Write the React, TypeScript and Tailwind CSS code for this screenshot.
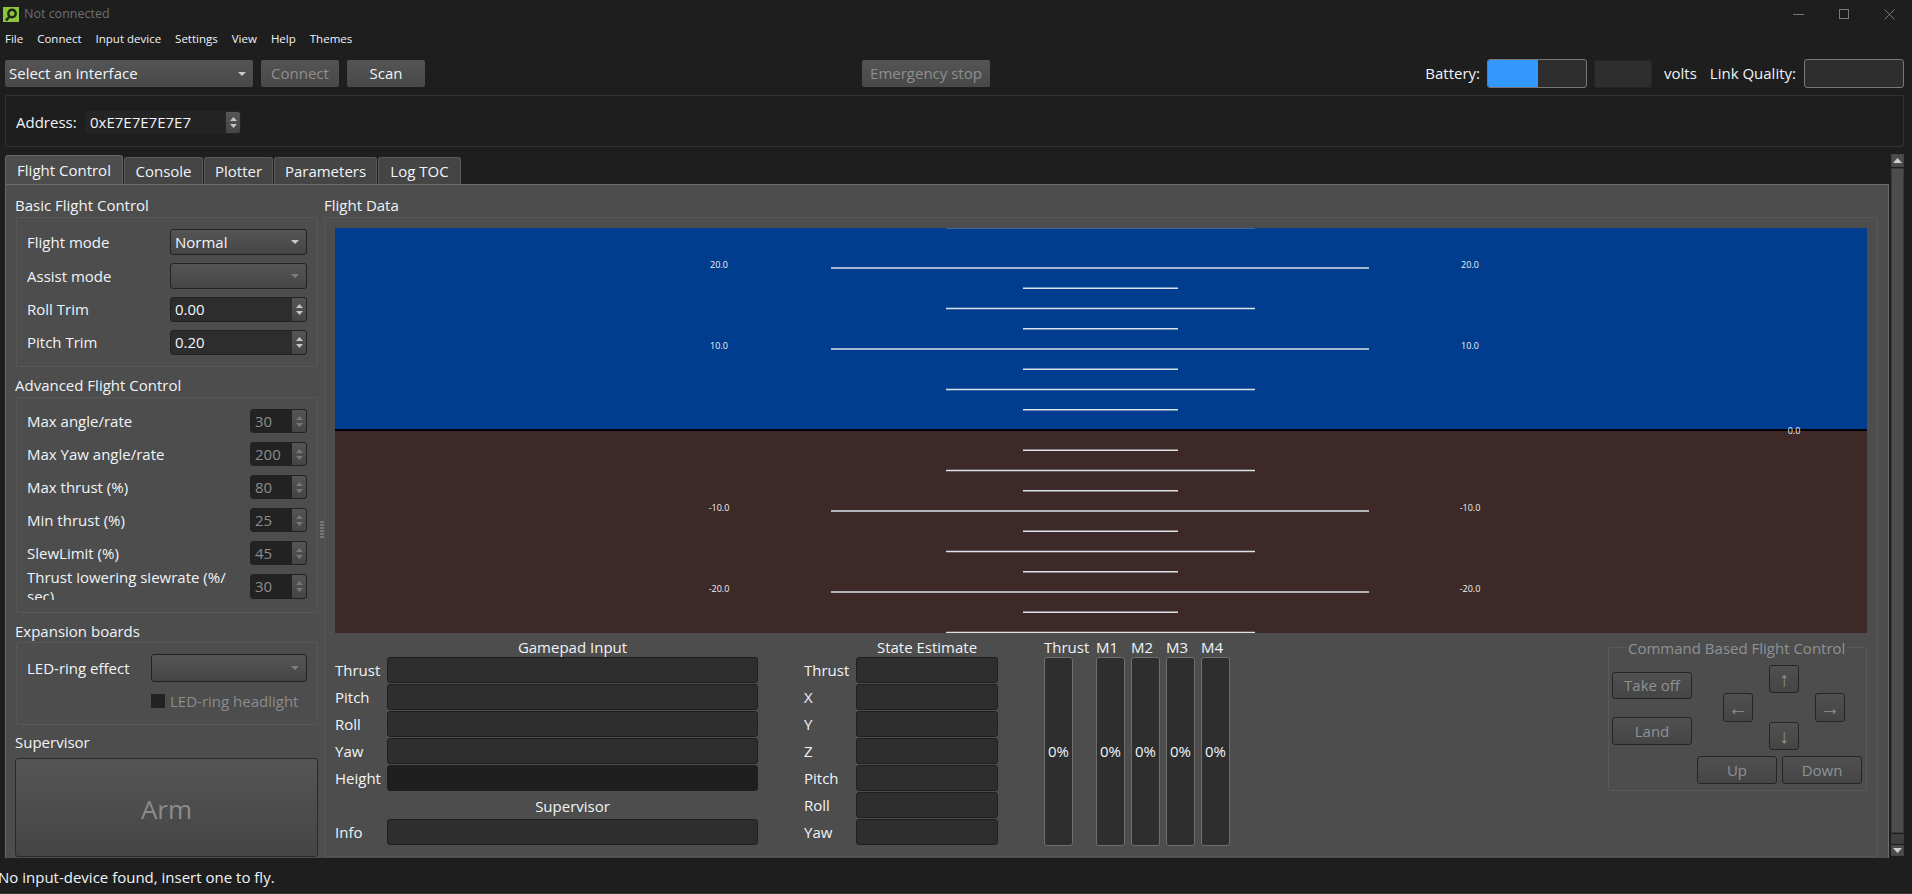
const LONG = [20, 10, -10, -20];
const MID = [25, 15, 5, -5, -15, -25];
const SHORT = [17.5, 12.5, 7.5, 2.5, -2.5, -7.5, -12.5, -17.5, -22.5];
const pitchY = (deg: number) => 202 - deg * 8.1;

function Logo() {
  return (
    <svg width="16" height="15" viewBox="0 0 16 15" className="ml-[3px] mr-[5px]">
      <rect width="16" height="15" fill="#8cc63f" />
      <circle cx="9" cy="6.5" r="3.7" fill="none" stroke="#1c2a14" strokeWidth="2.4" />
      <path d="M6.5 9.5 L3 13.5" stroke="#1c2a14" strokeWidth="2.6" />
    </svg>
  );
}

function Caret({ disabled }: { disabled?: boolean }) {
  return (
    <svg width="8" height="4" viewBox="0 0 8 4" className="shrink-0">
      <path d="M0 0 H8 L4 4 Z" fill={disabled ? "#7d7d7d" : "#c9c9c9"} />
    </svg>
  );
}

function Combo({ value, disabled }: { value?: string; disabled?: boolean }) {
  return (
    <div className="flex h-full flex-1 items-center justify-between rounded-[3px] border border-[#222] bg-gradient-to-b from-[#555] to-[#454545] pl-[4px] pr-[7px] text-[#f0f4f8]">
      <span>{value}</span>
      <Caret disabled={disabled} />
    </div>
  );
}

function Spin({ value, disabled, width }: { value: string; disabled?: boolean; width: string }) {
  const arrow = disabled ? "#777" : "#c4c4c4";
  return (
    <div className={`flex h-full items-stretch overflow-hidden rounded-[3px] ${width} ${disabled ? "bg-[#222] text-[#8c8c8c]" : "bg-[#2d2d2d] text-[#f0f4f8]"} border border-[#222]`}>
      <span className="flex flex-1 items-center pl-[4px]">{value}</span>
      <span className="flex w-[14px] flex-col items-center justify-center gap-[3px] bg-gradient-to-b from-[#555] to-[#454545]">
        <svg width="7" height="4" viewBox="0 0 7 4">
          <path d="M0 4 L3.5 0 L7 4 Z" fill={arrow} />
        </svg>
        <svg width="7" height="4" viewBox="0 0 7 4">
          <path d="M0 0 H7 L3.5 4 Z" fill={arrow} />
        </svg>
      </span>
    </div>
  );
}

function Row({ label, children, height }: { label: string; children: React.ReactNode; height: string }) {
  return (
    <div className={`flex items-center justify-between ${height}`}>
      <span>{label}</span>
      {children}
    </div>
  );
}

function Bar({ dark }: { dark?: boolean }) {
  return <div className={`h-[26px] rounded-[3px] border border-[#1f1f1f] ${dark ? "bg-[#1f1f1f]" : "bg-[#2e2e2e]"}`} />;
}

function BarRows({ rows, labelWidth }: { rows: string[]; labelWidth: string }) {
  return (
    <div className="flex flex-col gap-[1px]">
      {rows.map((row) => (
        <div key={row} className="flex items-center">
          <span className={labelWidth}>{row}</span>
          <div className="flex-1">
            <Bar dark={row === "Height"} />
          </div>
        </div>
      ))}
    </div>
  );
}

function Motor({ label, width }: { label: string; width: string }) {
  return (
    <div className={`flex flex-col ${width}`}>
      <div className="h-[24px] whitespace-nowrap pt-[5px] leading-[18px]">{label}</div>
      <div className="flex h-[189px] w-[29px] items-center justify-center rounded-[3px] border border-[#6e6e6e] bg-[#2e2e2e]">
        0%
      </div>
    </div>
  );
}

function CmdButton({ children, className }: { children: React.ReactNode; className: string }) {
  return (
    <div className={`flex items-center justify-center rounded-[3px] border border-[#252525] bg-gradient-to-b from-[#505050] to-[#454545] text-[#8d9296] ${className}`}>
      {children}
    </div>
  );
}

function Horizon() {
  const lineColor = "#dde2ea";
  return (
    <svg width="1532" height="405" viewBox="0 0 1532 405" className="block text-[9px]">
      <rect width="1532" height="202" fill="#003d8f" />
      <rect y="202" width="1532" height="203" fill="#3d2a28" />
      {LONG.map((d) => (
        <line key={d} x1="496" x2="1034" y1={pitchY(d)} y2={pitchY(d)} stroke={lineColor} strokeWidth="1.6" />
      ))}
      {MID.map((d) => (
        <line key={d} x1="611" x2="920" y1={pitchY(d)} y2={pitchY(d)} stroke={lineColor} strokeWidth="1.6" />
      ))}
      {SHORT.map((d) => (
        <line key={d} x1="688" x2="843" y1={pitchY(d)} y2={pitchY(d)} stroke={lineColor} strokeWidth="1.6" />
      ))}
      <rect y="201" width="1532" height="2" fill="#000" />
      {LONG.map((d) => (
        <g key={d} fill="#f4f4f4">
          <text x="384" y={pitchY(d)} textAnchor="middle">{d.toFixed(1)}</text>
          <text x="1135" y={pitchY(d)} textAnchor="middle">{d.toFixed(1)}</text>
        </g>
      ))}
      <text x="1459" y="206" textAnchor="middle" fill="#f4f4f4">0.0</text>
    </svg>
  );
}

export default function App() {
  return (
    <div className="flex h-[894px] w-[1912px] flex-col overflow-hidden bg-[#1e1e1e] font-['Open_Sans',sans-serif] text-[15px] text-[#f0f4f8]">
      {/* title bar */}
      <div className="flex h-[28px] items-center text-[12.5px] text-[#6f6f6f]">
        <Logo />
        <span>Not connected</span>
        <div className="ml-auto flex items-center gap-[35px] pr-[17px]">
          <div className="h-px w-[11px] bg-[#777]" />
          <div className="h-[10px] w-[10px] border border-[#777]" />
          <svg width="11" height="11" viewBox="0 0 11 11">
            <path d="M0.5 0.5 L10.5 10.5 M10.5 0.5 L0.5 10.5" stroke="#777" />
          </svg>
        </div>
      </div>

      {/* menu */}
      <div className="flex h-[21px] items-center gap-[14px] pl-[5px] text-[11.5px]">
        {["File", "Connect", "Input device", "Settings", "View", "Help", "Themes"].map((m) => (
          <span key={m}>{m}</span>
        ))}
      </div>

      {/* toolbar */}
      <div className="mt-[10px] flex h-[29px] items-center pl-[5px] pr-[8px]">
        <div className="h-[27px] w-[248px]">
          <div className="flex h-full items-center justify-between rounded-[2px] bg-gradient-to-b from-[#555] to-[#484848] pl-[4px] pr-[7px]">
            <span>Select an interface</span>
            <Caret />
          </div>
        </div>
        <div className="ml-[8px] flex h-[27px] w-[78px] items-center justify-center rounded-[2px] bg-gradient-to-b from-[#555] to-[#484848] text-[#8f8f8f]">
          Connect
        </div>
        <div className="ml-[8px] flex h-[27px] w-[78px] items-center justify-center rounded-[2px] bg-gradient-to-b from-[#555] to-[#484848]">
          Scan
        </div>
        <div className="ml-[437px] flex h-[27px] w-[128px] items-center justify-center rounded-[2px] bg-gradient-to-b from-[#555] to-[#484848] text-[#8f8f8f]">
          Emergency stop
        </div>
        <span className="ml-auto">Battery:</span>
        <div className="ml-[7px] flex h-[29px] w-[100px] overflow-hidden rounded-[3px] border border-[#777] bg-[#2e2e2e]">
          <div className="w-[50px] bg-[#3399ff]" />
        </div>
        <div className="ml-[7px] mt-px h-[28px] w-[58px] rounded-[2px] border border-[#252525] bg-[#2e2e2e]" />
        <span className="ml-[12px]">volts</span>
        <span className="ml-[13px]">Link Quality:</span>
        <div className="ml-[8px] h-[29px] w-[100px] rounded-[3px] border border-[#777] bg-[#2e2e2e]" />
      </div>

      {/* address */}
      <div className="ml-[5px] mr-[8px] mt-[7px] flex h-[52px] items-center rounded-[2px] border border-[#333] pl-[10px] pt-[3px]">
        <span className="w-[69px]">Address:</span>
        <div className="h-[23px]">
          <Spin value="0xE7E7E7E7E7" disabled={false} width="w-[156px] !bg-[#242424] !border-[#242424]" />
        </div>
      </div>

      {/* tabs + pane + scrollbar */}
      <div className="mt-[8px] flex h-[703px] pl-[5px]">
        <div className="flex w-[1884px] flex-col">
          <div className="flex h-[29px] items-end gap-px">
            <div className="flex h-[29px] w-[118px] items-center justify-center rounded-t-[3px] border border-b-0 border-[#666] bg-[#4d4d4d]">
              Flight Control
            </div>
            {[
              ["Console", "w-[79px]"],
              ["Plotter", "w-[69px]"],
              ["Parameters", "w-[103px]"],
              ["Log TOC", "w-[83px]"],
            ].map(([tab, width]) => (
              <div key={tab} className={`flex h-[27px] items-center justify-center rounded-t-[3px] border border-b-0 border-[#5a5a5a] bg-[#454545] ${width}`}>
                {tab}
              </div>
            ))}
          </div>

          <div className="flex h-[674px] border border-b-0 border-[#6a6a6a] bg-[#4d4d4d]">
            {/* left column */}
            <div className="relative w-[318px] shrink-0 pl-[10px] pr-[6px]">
              <div className="-ml-px h-[32px] pt-[11px] leading-[18px]">Basic Flight Control</div>
              <div className="flex h-[150px] flex-col gap-[8px] rounded-[2px] border border-[#575757] px-[10px] py-[11px]">
                <Row label="Flight mode" height="h-[26px]">
                  <div className="h-full w-[137px]"><Combo value="Normal" /></div>
                </Row>
                <Row label="Assist mode" height="h-[26px]">
                  <div className="h-full w-[137px]"><Combo disabled /></div>
                </Row>
                <Row label="Roll Trim" height="h-[25px]">
                  <Spin value="0.00" width="w-[137px]" />
                </Row>
                <Row label="Pitch Trim" height="h-[25px]">
                  <Spin value="0.20" width="w-[137px]" />
                </Row>
              </div>

              <div className="-ml-px h-[30px] pt-[9px] leading-[18px]">Advanced Flight Control</div>
              <div className="flex h-[216px] flex-col gap-[9px] rounded-[2px] border border-[#575757] px-[10px] pt-[11px]">
                <Row label="Max angle/rate" height="h-[24px]"><Spin value="30" disabled width="w-[57px]" /></Row>
                <Row label="Max Yaw angle/rate" height="h-[24px]"><Spin value="200" disabled width="w-[57px]" /></Row>
                <Row label="Max thrust (%)" height="h-[24px]"><Spin value="80" disabled width="w-[57px]" /></Row>
                <Row label="Min thrust (%)" height="h-[24px]"><Spin value="25" disabled width="w-[57px]" /></Row>
                <Row label="SlewLimit (%)" height="h-[24px]"><Spin value="45" disabled width="w-[57px]" /></Row>
                <div className="flex h-[25px] items-center justify-between">
                  <div className="flex h-[27px] items-center overflow-hidden leading-[19px]">
                    <span>
                      Thrust lowering slewrate (%/
                      <br />
                      sec)
                    </span>
                  </div>
                  <Spin value="30" disabled width="w-[57px]" />
                </div>
              </div>

              <div className="-ml-px h-[29px] pt-[9px] leading-[18px]">Expansion boards</div>
              <div className="h-[83px] rounded-[2px] border border-[#575757] px-[10px] pt-[11px]">
                <Row label="LED-ring effect" height="h-[28px]">
                  <div className="h-full w-[156px]"><Combo disabled /></div>
                </Row>
                <div className="mt-[12px] flex items-center pl-[124px] leading-[14px] text-[#8c8c8c]">
                  <div className="mr-[5px] h-[14px] w-[14px] bg-[#222]" />
                  LED-ring headlight
                </div>
              </div>

              <div className="-ml-px h-[33px] pt-[8px] leading-[18px]">Supervisor</div>
              <div className="-ml-px flex h-[99px] items-center justify-center rounded-[3px] border border-[#2a2a2a] bg-gradient-to-b from-[#555] to-[#454545] pt-[3px] text-[26px] text-[#8c8c8c]">
                Arm
              </div>

              {/* splitter grip */}
              <div className="absolute right-0 top-[336px] flex flex-col gap-px">
                {[0, 1, 2, 3, 4, 5].map((n) => (
                  <div key={n} className="h-[2px] w-[4px] bg-[#777]" />
                ))}
              </div>
            </div>

            {/* right column */}
            <div className="flex w-[1554px] flex-col">
              <div className="h-[32px] pt-[11px] leading-[18px]">Flight Data</div>
              <div className="h-[640px] rounded-[2px] border border-[#575757] pl-[10px] pr-[10px] pt-[10px]">
                <Horizon />
                <div className="flex">
                  <div className="w-[423px]">
                    <div className="h-[24px] pl-[52px] pt-[5px] text-center leading-[18px]">Gamepad Input</div>
                    <BarRows rows={["Thrust", "Pitch", "Roll", "Yaw", "Height"]} labelWidth="w-[52px]" />
                    <div className="h-[28px] pl-[52px] pt-[6px] text-center leading-[18px]">Supervisor</div>
                    <BarRows rows={["Info"]} labelWidth="w-[52px]" />
                  </div>

                  <div className="ml-[46px] w-[194px]">
                    <div className="h-[24px] pl-[52px] pt-[5px] text-center leading-[18px]">State Estimate</div>
                    <BarRows rows={["Thrust", "X", "Y", "Z", "Pitch", "Roll", "Yaw"]} labelWidth="w-[52px]" />
                  </div>

                  <div className="ml-[46px] flex">
                    <Motor label="Thrust" width="w-[52px]" />
                    <Motor label="M1" width="w-[35px]" />
                    <Motor label="M2" width="w-[35px]" />
                    <Motor label="M3" width="w-[35px]" />
                    <Motor label="M4" width="w-[35px]" />
                  </div>

                  <div className="relative ml-auto mt-[14px] h-[144px] w-[259px] rounded-[2px] border border-[#5a5a5a] pl-[3px] pr-[4px] pt-[17px]">
                    <span className="absolute left-[17px] top-[-9px] whitespace-nowrap bg-[#4d4d4d] px-[2px] leading-[18px] text-[#8d9296]">
                      Command Based Flight Control
                    </span>
                    <div className="flex">
                      <div className="flex w-[80px] flex-col gap-[18px] pt-[7px]">
                        <CmdButton className="h-[27px]">Take off</CmdButton>
                        <CmdButton className="h-[28px]">Land</CmdButton>
                      </div>
                      <div className="ml-[31px] grid grid-cols-[30px_30px_30px] grid-rows-[28px_29px_28px] gap-x-[16px] font-['Liberation_Sans',sans-serif] text-[20px] leading-none">
                        <div />
                        <CmdButton className="h-[28px]">↑</CmdButton>
                        <div />
                        <CmdButton className="h-[29px]">←</CmdButton>
                        <div />
                        <CmdButton className="h-[29px]">→</CmdButton>
                        <div />
                        <CmdButton className="h-[28px]">↓</CmdButton>
                        <div />
                      </div>
                    </div>
                    <div className="mt-[6px] flex justify-end gap-[5px]">
                      <CmdButton className="h-[28px] w-[80px]">Up</CmdButton>
                      <CmdButton className="h-[28px] w-[80px]">Down</CmdButton>
                    </div>
                  </div>
                </div>
              </div>
            </div>
          </div>
        </div>

        {/* scrollbar */}
        <div className="-mt-px ml-[2px] flex h-[702px] w-[13px] flex-col gap-px">
          <div className="flex h-[13px] items-center justify-center border border-[#444] bg-[#4d4d4d]">
            <svg width="9" height="5" viewBox="0 0 9 5"><path d="M0 5 L4.5 0 L9 5 Z" fill="#cfcfcf" /></svg>
          </div>
          <div className="flex-1 border border-[#3a3a3a] bg-[#4d4d4d]" />
          <div className="h-[10px] border border-[#3a3a3a] bg-[#3f3f3f]" />
          <div className="flex h-[11px] items-center justify-center border border-[#444] bg-[#4d4d4d]">
            <svg width="9" height="5" viewBox="0 0 9 5"><path d="M0 0 H9 L4.5 5 Z" fill="#cfcfcf" /></svg>
          </div>
        </div>
      </div>

      {/* status bar */}
      <div className="flex flex-1 items-center border-b border-[#3a3a3a] pt-[4px]">
        <span className="-ml-[2px]">No input-device found, insert one to fly.</span>
      </div>
    </div>
  );
}
